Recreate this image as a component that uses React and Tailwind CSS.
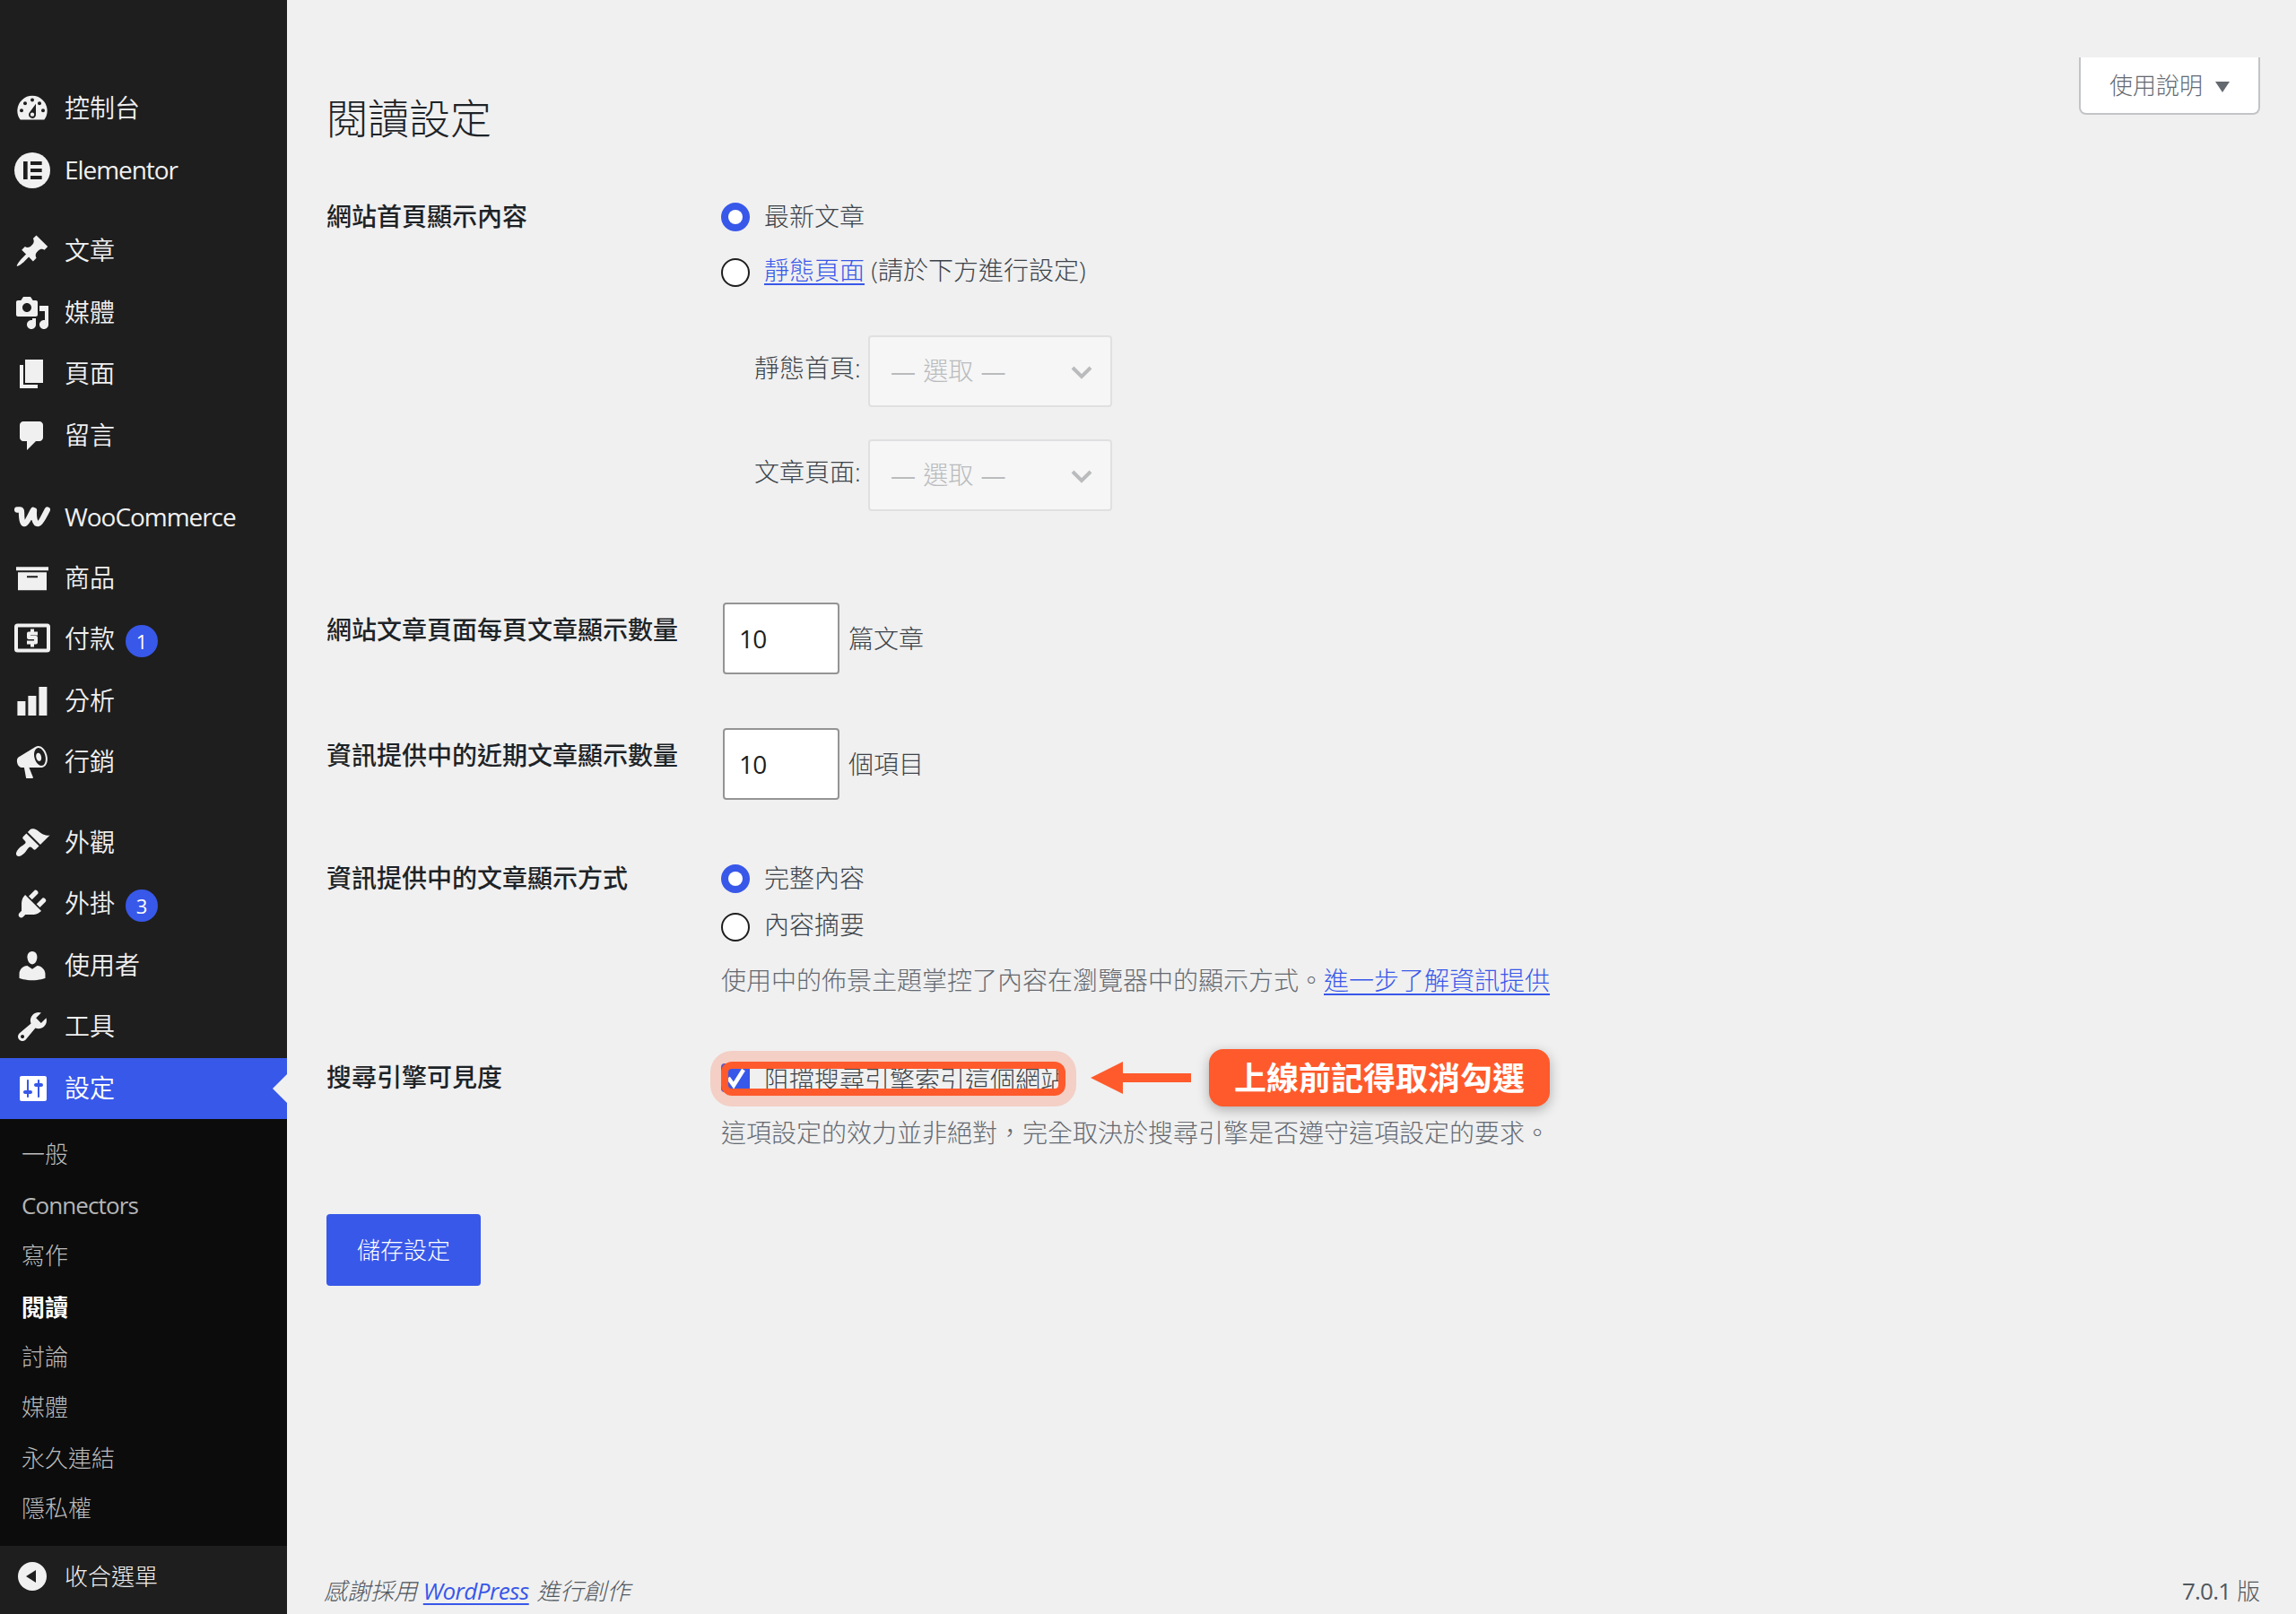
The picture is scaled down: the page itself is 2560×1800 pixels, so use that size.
const ICONS = {
  posts: "M10.44 3.02l1.82-1.82 6.36 6.35-1.83 1.82c-1.05-.68-2.48-.57-3.41.36l-.75.75c-.92.93-1.04 2.35-.35 3.41l-1.83 1.82-2.41-2.41-2.8 2.79c-.42.42-3.38 2.71-3.8 2.29s1.86-3.39 2.28-3.81l2.79-2.79L4.1 9.36l1.83-1.82c1.05.69 2.48.57 3.4-.36l.75-.75c.93-.92 1.05-2.35.36-3.41z",
  media: "M13 11V4c0-.55-.45-1-1-1h-1.67L9 1H5L3.67 3H2c-.55 0-1 .45-1 1v7c0 .55.45 1 1 1h10c.55 0 1-.45 1-1zM7 4.5c1.38 0 2.5 1.12 2.5 2.5S8.38 9.5 7 9.5 4.5 8.38 4.5 7 5.62 4.5 7 4.5zM14 6h5v10.5c0 1.38-1.12 2.5-2.5 2.5S14 17.88 14 16.5s1.12-2.5 2.5-2.5c.17 0 .34.02.5.05V9h-3V6zm-4 8.05V13h2v3.5c0 1.38-1.12 2.5-2.5 2.5S7 17.88 7 16.5 8.12 14 9.5 14c.17 0 .34.02.5.05z",
  pages: "M6 15V2h10v13H6zm-1 1h8v2H3V5h2v11z",
  comments: "M5 2h9c1.1 0 2 .9 2 2v7c0 1.1-.9 2-2 2h-2l-5 5v-5H5c-1.1 0-2-.9-2-2V4c0-1.1.9-2 2-2z",
  archive: "M19 3.6v2H1v-2h18zM2 6.6h16v10H2v-10zm11 3v-1H7v1h6z",
  chart: "M18.2 18V2h-4.5v16h4.5zm-6 0V7H7.7v11h4.5zm-6 0v-8H1.7v8h4.5z",
  megaphone: "M18.15 5.94c.46 1.62.38 3.22-.02 4.48-.42 1.28-1.26 2.18-2.3 2.48-.16.06-.26.06-.4.06-.06.02-.12.02-.18.02-.06.02-.14.02-.22.02h-6.8l2.22 5.5c.02.14-.06.26-.14.34-.08.1-.24.16-.34.16H6.95c-.1 0-.26-.06-.34-.16-.08-.08-.16-.2-.14-.34l-1-5.5H4.25l-.02-.02c-.5.06-1.08-.18-1.54-.62s-.88-1.08-1.06-1.88c-.24-.8-.2-1.56-.02-2.2.18-.62.58-1.08 1.06-1.3l.02-.02 9-5.4c.1-.06.18-.1.24-.16.06-.04.14-.08.24-.12.16-.08.28-.12.5-.18 1.04-.3 2.24.1 3.22.98s1.84 2.24 2.26 3.86zm-2.58 5.98h-.02c.4-.1.74-.34 1.04-.7.58-.7.86-1.76.86-3.04 0-.64-.1-1.3-.28-1.98-.34-1.36-1.02-2.5-1.78-3.24s-1.68-1.1-2.46-.88c-.82.22-1.4.96-1.7 2-.32 1.04-.28 2.36.06 3.72.38 1.36 1 2.5 1.8 3.24.78.74 1.62 1.1 2.48.88zm-2.54-7.08c.22-.04.42-.02.62.04.38.16.76.48 1.02 1s.42 1.2.42 1.78c0 .3-.04.56-.12.8-.18.48-.44.84-.86.94-.34.1-.8-.06-1.14-.4s-.64-.86-.78-1.5c-.18-.62-.12-1.24.02-1.72s.48-.84.82-.94z",
  appearance: "M14.48 11.06L7.41 3.99l1.5-1.5c.5-.56 2.3-.47 3.51.32 1.21.8 1.43 1.28 2.91 2.1 1.18.64 2.45 1.26 4.45.85zm-.71.71L6.7 4.7 4.93 6.47c-.39.39-.39 1.02 0 1.41l1.06 1.06c.39.39.39 1.03 0 1.42-.6.6-1.43 1.11-2.21 1.69-.35.26-.7.53-1.01.84C1.43 14.23.4 16.08 1.4 17.07c.99 1 2.84-.03 4.18-1.36.31-.31.58-.66.85-1.02.57-.78 1.08-1.61 1.69-2.21.39-.39 1.02-.39 1.41 0l1.06 1.06c.39.39 1.02.39 1.41 0z",
  plugins: "M13.11 4.36L9.87 7.6 8 5.73l3.24-3.24c.35-.34 1.05-.2 1.56.32.52.51.66 1.21.31 1.55zm-8 1.77l.91-1.12 9.01 9.01-1.19.84c-.71.71-2.63 1.16-3.82 1.16H6.14L4.9 17.26c-.59.59-1.54.59-2.12 0-.59-.58-.59-1.53 0-2.12l1.24-1.24v-3.88c0-1.13.4-3.19 1.09-3.89zm7.26 3.97l3.24-3.24c.34-.35 1.04-.21 1.55.31.52.51.66 1.21.31 1.55l-3.24 3.25z",
  users: "M10 9.25c-2.27 0-2.73-3.44-2.73-3.44C7 4.02 7.82 2 9.97 2c2.16 0 2.98 2.02 2.71 3.81 0 0-.41 3.44-2.68 3.44zm0 2.57L12.72 10c2.39 0 4.52 2.33 4.52 4.53v2.49s-3.65 1.13-7.24 1.13c-3.65 0-7.24-1.13-7.24-1.13v-2.49c0-2.25 1.94-4.48 4.47-4.48z",
  tools: "M16.68 9.77c-1.34 1.34-3.3 1.67-4.95.99l-5.41 6.52c-.99.99-2.59.99-3.58 0s-.99-2.59 0-3.57l6.52-5.42c-.68-1.65-.35-3.61.99-4.95 1.28-1.28 3.12-1.62 4.72-1.06l-2.89 2.89 2.82 2.82 2.86-2.87c.53 1.58.18 3.39-1.08 4.65zM3.81 16.21c.4.39 1.04.39 1.43 0 .4-.4.4-1.04 0-1.43-.39-.4-1.03-.4-1.43 0-.39.39-.39 1.03 0 1.43z",
  settings: "M18 16V4c0-.55-.45-1-1-1H4c-.55 0-1 .45-1 1v12c0 .55.45 1 1 1h13c.55 0 1-.45 1-1zM8 11h1c.55 0 1 .45 1 1s-.45 1-1 1H8v1.5c0 .28-.22.5-.5.5s-.5-.22-.5-.5V13H6c-.55 0-1-.45-1-1s.45-1 1-1h1V5.5c0-.28.22-.5.5-.5s.5.22.5.5V11zm5-2h-1c-.55 0-1-.45-1-1s.45-1 1-1h1V5.5c0-.28.22-.5.5-.5s.5.22.5.5V7h1c.55 0 1 .45 1 1s-.45 1-1 1h-1v5.5c0 .28-.22.5-.5.5s-.5-.22-.5-.5V9z",
};

function Dashicon({ name }) {
  return (
    <svg className="w-10 h-10 shrink-0" viewBox="0 0 20 20" fill="currentColor">
      <path d={ICONS[name]} />
    </svg>
  );
}

function DashboardIcon() {
  return (
    <svg className="w-10 h-10 shrink-0" viewBox="0 0 120 120" fill="currentColor">
      <path d="M20 97.5A50 50 0 1 1 100 97.5Z" />
      <g fill="#1e1e1e">
        <circle cx="60" cy="31.5" r="6" />
        <circle cx="36" cy="43" r="6" />
        <circle cx="84" cy="43" r="6" />
        <circle cx="24" cy="67" r="6" />
        <circle cx="96" cy="67" r="6" />
        <path d="M72 44L72 80A12 12 0 1 1 49 76Z" />
      </g>
      <circle cx="60" cy="80" r="6.5" />
    </svg>
  );
}

function ElementorIcon() {
  return (
    <svg className="w-10 h-10 shrink-0" viewBox="0 0 120 120" fill="currentColor">
      <circle cx="60" cy="60" r="60" />
      <path fill="#1e1e1e" d="M30 30H44V90H30ZM54 30H92V42H54ZM54 54H92V66H54ZM54 78H92V90H54Z" />
    </svg>
  );
}

function WooIcon() {
  return (
    <svg className="w-10 h-10 shrink-0" viewBox="0 0 120 120" fill="none" stroke="currentColor" strokeWidth="19" strokeLinecap="round" strokeLinejoin="round">
      <path d="M9.500 37.500H19Q24 38 24 46C24 68 26 84.500 33 84.500C40 84.500 52 60 63 38.500M66 40C64 62 68 84.500 79 84.500C86 84.500 98 62 110.500 37.500" />
    </svg>
  );
}

function PaymentsIcon() {
  return (
    <svg className="w-10 h-10 shrink-0" viewBox="0 0 40 40" fill="none" stroke="currentColor">
      <rect x="2" y="4.500" width="36" height="28" rx="1.500" strokeWidth="4" />
      <path d="M26 13.500H16V18H24V23.500H14" strokeWidth="4" strokeLinejoin="round" />
      <path d="M20 8.500V13M20 24V28.500" strokeWidth="4" />
    </svg>
  );
}

const MENU = [
  [
    { label: "控制台", icon: <DashboardIcon /> },
    { label: "Elementor", icon: <ElementorIcon />, latin: true },
  ],
  [
    { label: "文章", icon: <Dashicon name="posts" /> },
    { label: "媒體", icon: <Dashicon name="media" /> },
    { label: "頁面", icon: <Dashicon name="pages" /> },
    { label: "留言", icon: <Dashicon name="comments" /> },
  ],
  [
    { label: "WooCommerce", icon: <WooIcon />, latin: true },
    { label: "商品", icon: <Dashicon name="archive" /> },
    { label: "付款", icon: <PaymentsIcon />, count: 1 },
    { label: "分析", icon: <Dashicon name="chart" /> },
    { label: "行銷", icon: <Dashicon name="megaphone" /> },
  ],
  [
    { label: "外觀", icon: <Dashicon name="appearance" /> },
    { label: "外掛", icon: <Dashicon name="plugins" />, count: 3 },
    { label: "使用者", icon: <Dashicon name="users" /> },
    { label: "工具", icon: <Dashicon name="tools" /> },
  ],
];

const SUBMENU = ["一般", "Connectors", "寫作", "閱讀", "討論", "媒體", "永久連結", "隱私權"];

const SUBMENU_STYLES = {
  Connectors: "text-[#b5b5b5] tracking-[-0.9px]",
  閱讀: "font-bold text-white pt-1",
};

function MenuItem({ label, icon, count, latin }) {
  return (
    <a className="flex items-center h-[68.5px] pl-4 text-[#f0f0f1]">
      {icon}
      <span className={latin ? "ml-4 -mt-px tracking-[-1.05px]" : "ml-4 -mt-0.5 font-[350]"}>{label}</span>
      {count && (
        <span className="ml-3 mt-1 w-9 h-9 rounded-full bg-[#3858e9] text-white text-[22px] leading-9 text-center">
          {count}
        </span>
      )}
    </a>
  );
}

function Sidebar() {
  return (
    <nav className="w-80 h-[1800px] shrink-0 bg-[#1e1e1e] flex flex-col pt-[87px]">
      <div className="flex flex-col gap-[22px] h-[1093px]">
        {MENU.map((group, i) => (
          <div key={i} className="last:-mt-px">
            {group.map((item) => (
              <MenuItem key={item.label} {...item} />
            ))}
          </div>
        ))}
      </div>

      {/* Current section */}
      <a className="flex items-center justify-between h-[68px] pl-4 bg-[#3858e9] text-white">
        <span className="flex items-center">
          <Dashicon name="settings" />
          <span className="ml-4 -mt-0.5 font-[350]">設定</span>
        </span>
        <svg className="w-4 h-8" viewBox="0 0 16 32">
          <path d="M16 0V32L0 16Z" fill="#f0f0f0" />
        </svg>
      </a>
      <div className="h-[476px] bg-[#0c0c0c] pt-[11px] pl-6 text-[26px]">
        {SUBMENU.map((item) => (
          <a key={item}
            className={`flex items-center h-[56.4px] ${SUBMENU_STYLES[item] || "font-light text-[#bdbdbd]"}`}>
            {item}
          </a>
        ))}
      </div>

      <a className="flex items-center h-[68px] pl-4 text-[26px] text-[#f0f0f1]">
        <svg className="w-10 h-10" viewBox="0 0 40 40">
          <circle cx="20" cy="20" r="16" fill="currentColor" />
          <path d="M13 20L24 13V27Z" fill="#1e1e1e" />
        </svg>
        <span className="ml-4 font-light">收合選單</span>
      </a>
    </nav>
  );
}

function Radio({ checked }) {
  return checked ? (
    <span className="w-8 h-8 mr-4 shrink-0 rounded-full bg-[#3858e9] flex items-center justify-center">
      <span className="w-4 h-4 rounded-full bg-white" />
    </span>
  ) : (
    <span className="w-8 h-8 mr-4 shrink-0 rounded-full bg-white border-2 border-[#1e1e1e]" />
  );
}

function Row({ label, className, labelClass, children }) {
  return (
    <div className={`flex ${className}`}>
      <div className={`w-[440px] shrink-0 h-10 leading-10 font-medium text-[#1d2327] ${labelClass}`}>{label}</div>
      <div className="flex-1">{children}</div>
    </div>
  );
}

function PageSelect({ label }) {
  return (
    <div className="flex items-center">
      <span className="w-[127px] -mt-2">{label}</span>
      <span className="w-[272px] h-20 flex items-center justify-between pl-[23px] pr-5 rounded-[4px] border-2 border-[#e0e0e1] bg-[#f6f6f6] text-[#b9bbbd]">
        <span className="-mt-0.5 [word-spacing:1px]"><span className="font-normal">—</span> 選取 <span className="font-normal">—</span></span>
        <svg className="w-6 h-4 mt-0.5" viewBox="0 0 24 16" fill="none" stroke="#b9bbbd" strokeWidth="4">
          <path d="M2 3L12 13L22 3" />
        </svg>
      </span>
    </div>
  );
}

function NumberField({ unit }) {
  return (
    <div className="flex items-center">
      <span className="w-[130px] h-20 ml-0.5 pl-4 flex items-center rounded-[4px] border-2 border-[#949494] bg-white font-normal text-[#1e1e1e] tracking-[-0.8px]">10</span>
      <span className="ml-2.5">{unit}</span>
    </div>
  );
}

// Checkbox with the orange reminder laid over it
function SearchVisibility() {
  return (
    <div className="relative">
      <div className="flex items-center h-10">
        <span className="w-8 h-8 mr-4 -mt-1 rounded-[4px] bg-[#3858e9] flex items-center justify-center">
          <svg className="w-8 h-8" viewBox="0 0 32 32" fill="none" stroke="#fff" strokeWidth="4.500">
            <path d="M8 16L14 24.500L25 7" />
          </svg>
        </span>
        <span className="-mt-px">阻擋搜尋引擎索引這個網站</span>
      </div>
      <div className="absolute left-0 top-0 w-96 h-[38px] rounded-[12px] border-8 border-[#ff5a2c] shadow-[0_0_0_12px_rgba(255,90,44,0.22)]" />
      <svg className="absolute left-[412px] top-0 w-28 h-9" viewBox="0 0 112 36">
        <path d="M0 18L36 0V13H112V23H36V36Z" fill="#ff5a2c" />
      </svg>
      <div className="absolute left-[544px] -top-3.5 w-[380px] h-16 rounded-[16px] bg-[#ff5a2c] text-white text-[36px] leading-[66px] font-bold text-center shadow-[0_4px_14px_rgba(0,0,0,0.28)]">
        上線前記得取消勾選
      </div>
    </div>
  );
}

export default function App() {
  return (
    <div className="w-[2560px] h-[1800px] overflow-hidden flex bg-[#f0f0f0] text-[28px] leading-10 text-[#3c434a] font-['Open_Sans','Noto_Sans_CJK_TC',sans-serif]">
      <Sidebar />

      <main className="flex-1 flex flex-col pl-11 pr-10 font-light">
        <header className="h-[222px] flex items-start justify-between">
          <h1 className="mt-[101px] text-[46px] leading-[60px] text-[#1d2327]">閱讀設定</h1>
          <button className="mt-16 w-[202px] h-16 flex items-center justify-center gap-3.5 rounded-b-[8px] border-2 border-t-0 border-[#c3c4c7] bg-white text-[26px] text-[#646970]">
            使用說明
            <svg className="w-4 h-3 mt-1" viewBox="0 0 16 12"><path d="M0 0H16L8 12Z" fill="#646970" /></svg>
          </button>
        </header>

        <Row label="網站首頁顯示內容" className="h-[450px]" labelClass="-mt-px">
          <div className="flex items-center h-10"><Radio checked /><span className="-mt-0.5">最新文章</span></div>
          <div className="flex items-center h-10 mt-[22px]">
            <Radio />
            <span className="-mt-1.5">
              <a className="text-[#3858e9] underline decoration-2 underline-offset-4">靜態頁面</a> (請於下方進行設定)
            </span>
          </div>
          <div className="mt-[50px] pl-[37px] flex flex-col gap-9">
            <PageSelect label="靜態首頁:" />
            <PageSelect label="文章頁面:" />
          </div>
        </Row>

        <Row label="網站文章頁面每頁文章顯示數量" className="h-[140px]" labelClass="mt-2.5">
          <NumberField unit="篇文章" />
        </Row>

        <Row label="資訊提供中的近期文章顯示數量" className="h-[147px]" labelClass="mt-2.5">
          <NumberField unit="個項目" />
        </Row>

        <Row label="資訊提供中的文章顯示方式" className="h-[225px]">
          <div className="flex items-center h-[42px]"><Radio checked /><span className="-mt-0.5">完整內容</span></div>
          <div className="flex items-center h-10 mt-[13px]"><Radio /><span className="-mt-1.5">內容摘要</span></div>
          <p className="mt-[19px] text-[#646970]">
            使用中的佈景主題掌控了內容在瀏覽器中的顯示方式。<a className="text-[#3858e9] underline decoration-2 underline-offset-4">進一步了解資訊提供</a>
          </p>
        </Row>

        <Row label="搜尋引擎可見度" className="h-[170px]" labelClass="-mt-[3px]">
          <SearchVisibility />
          <p className="mt-[19px] text-[#646970]">這項設定的效力並非絕對，完全取決於搜尋引擎是否遵守這項設定的要求。</p>
        </Row>

        <button className="w-[172px] h-20 rounded-[4px] bg-[#3858e9] text-white text-[26px]">儲存設定</button>

        <footer className="mt-auto mb-1.5 flex justify-between text-[26px] text-[#50575e]">
          <p className="italic -ml-[3px]">
            感謝採用 <a className="mr-0.5 font-normal tracking-[-0.5px] text-[#3858e9] underline decoration-2 underline-offset-4">WordPress</a> 進行創作
          </p>
          <p><span className="font-normal tracking-[-0.8px]">7.0.1</span> 版</p>
        </footer>
      </main>
    </div>
  );
}
